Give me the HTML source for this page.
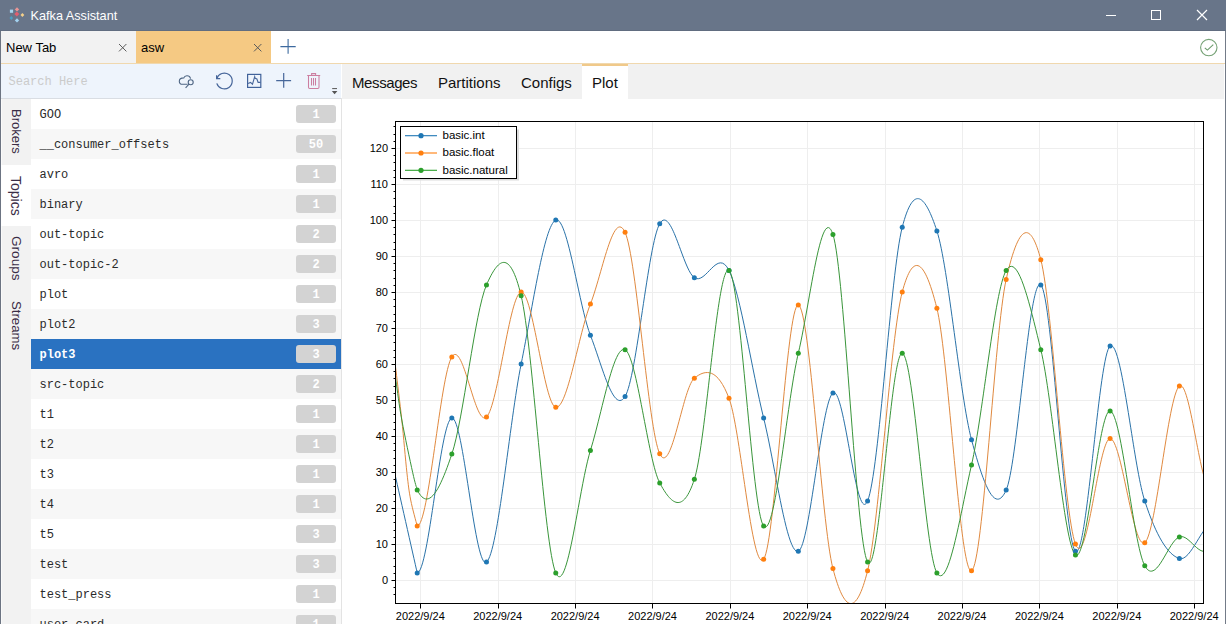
<!DOCTYPE html>
<html><head><meta charset="utf-8">
<style>
*{margin:0;padding:0;box-sizing:border-box}
html,body{width:1226px;height:624px;overflow:hidden;background:#fff;font-family:"Liberation Sans",sans-serif;position:relative}
.abs{position:absolute}
#title{left:0;top:0;width:1226px;height:31px;background:#687589;border-bottom:1px solid #616d80}
#title .t{position:absolute;left:30.5px;top:9px;font-size:12.7px;color:#fff;line-height:15px}
#tabbar{left:0;top:31px;width:1226px;height:32px;background:#fff}
.tab{position:absolute;top:0;height:32px;width:135px;font-size:13px;line-height:15px;color:#000}
.tab .lbl{position:absolute;left:5px;top:9px}
.tab .x{position:absolute;right:9.8px;top:12.8px;width:7.4px;height:7.4px;overflow:visible}
#orange{left:0;top:63px;width:1226px;height:1px;background:#f0d8ae}
#search{left:1px;top:64px;width:340px;height:35px;background:#eef4fc;border-bottom:1px solid #d9dde3}
#search .ph{position:absolute;left:7.5px;top:11px;font-family:"Liberation Mono",monospace;font-size:12px;color:#cbcbcb;line-height:14px}
#vtabs{left:1px;top:99px;width:30px;height:525px;background:#f2f2f2;border-left:1px solid #fafafa}
.vt{position:absolute;left:-1px;width:30px;color:#3a2d46;font-size:13.5px}
.vt span{position:absolute;left:22px;top:0;transform-origin:0 0;transform:rotate(90deg);white-space:nowrap;line-height:14px}
.row{position:absolute;left:31px;width:310px;height:30px;background:#fff}
.row.alt{background:#f7f7f7}
.row.sel{background:#2a72c1}
.row .tn{position:absolute;left:8.5px;top:9px;font-family:"Liberation Mono",monospace;font-size:12px;line-height:14px;color:#2a2a2a}
.row.sel .tn{color:#fff;font-weight:bold}
.row .badge{position:absolute;left:265px;top:6px;width:40px;height:18px;border-radius:3px;background:#d3d3d3;color:#fff;font-family:"Liberation Mono",monospace;font-weight:bold;font-size:12px;line-height:20px;text-align:center}
#split{left:341px;top:98px;width:1px;height:526px;background:#e3e3e3}
#rtabs{left:342px;top:64px;width:882px;height:35px;background:#f1f1f1}
.rt{position:absolute;top:0;height:35px;font-size:15px;line-height:17px;color:#111}
.rt span{position:absolute;top:10px;white-space:nowrap}
#plottab{left:240px;width:46px;background:#fff;border-top:2px solid #f0c98a}
#rborder{left:1225px;top:31px;width:1px;height:593px;background:#737b88}
#lborder{left:0;top:31px;width:1px;height:593px;background:#6c7482}
svg.chart{position:absolute;left:0;top:0}
</style></head><body>
<div id="title" class="abs">
  <svg class="abs" style="left:0;top:0" width="30" height="30" viewBox="0 0 30 30">
    <path d="M17,7.3L19.2,9.4L17,11.5L14.8,9.4Z" fill="#e99595"/>
    <rect x="9.9" y="9.6" width="3.2" height="3.2" fill="#a8d4ee"/>
    <path d="M16.8,11.6L19.3,14.1L16.8,16.6L14.3,14.1Z" fill="#df5f70"/>
    <path d="M22.4,12.9L24.3,14.9L22.4,16.9L20.5,14.9Z" fill="#f3d08a"/>
    <path d="M11.3,15.9L13.1,17.9L11.3,19.9L9.5,17.9Z" fill="#4b9ec2"/>
    <path d="M17,18.3L19.2,20.4L17,22.5L14.8,20.4Z" fill="#a3d2f0"/>
  </svg>
  <div class="t">Kafka Assistant</div>
  <svg class="abs" style="left:1100px;top:5px" width="120" height="22" viewBox="0 0 120 22">
    <path d="M6,10.5H16" stroke="#fff" stroke-width="1"/>
    <rect x="51.5" y="5.5" width="9" height="9" fill="none" stroke="#fff" stroke-width="1"/>
    <path d="M97,5L107,15M107,5L97,15" stroke="#fff" stroke-width="1.2"/>
  </svg>
</div>
<div id="tabbar" class="abs">
  <div class="tab" style="left:1px;background:#f2f2f2"><span class="lbl">New Tab</span>
    <svg class="x" viewBox="0 0 7.4 7.4"><path d="M0,0L7.4,7.4M7.4,0L0,7.4" stroke="#5a5a5a" stroke-width="1"/></svg></div>
  <div class="tab" style="left:136px;background:#f5c983"><span class="lbl">asw</span>
    <svg class="x" viewBox="0 0 7.4 7.4"><path d="M0,0L7.4,7.4M7.4,0L0,7.4" stroke="#5a5a5a" stroke-width="1"/></svg></div>
  <svg class="abs" style="left:279px;top:7px" width="18" height="18" viewBox="0 0 18 18"><path d="M1.4,8.6H16.7M9.1,1.1V15.7" stroke="#3d6a9f" stroke-width="1.1"/></svg>
  <svg class="abs" style="left:1198px;top:6px" width="22" height="22" viewBox="0 0 22 22"><circle cx="10.8" cy="10.6" r="8.2" fill="none" stroke="#76a276" stroke-width="1.1"/><path d="M6.8,10.8L9.4,13.1L15.3,7.6" fill="none" stroke="#6a9a6a" stroke-width="1.1"/></svg>
</div>
<div id="orange" class="abs"></div>
<div id="search" class="abs">
  <span class="ph">Search Here</span>
  <svg class="abs" style="left:169px;top:0" width="170" height="34" viewBox="170 64 170 34">
    <!-- cloud search -->
    <path d="M190.6,78.6 C190,76.6 188.4,75.7 186.8,75.8 C185.2,75.9 184.2,76.9 183.8,77.9 C181.2,77.9 179.3,79.4 179.3,81.2 C179.3,83 180.8,84.3 182.6,84.3 L187.6,84.3" fill="none" stroke="#4f6684" stroke-width="1.1"/>
    <circle cx="190.7" cy="82.3" r="2.5" fill="none" stroke="#4f6684" stroke-width="1.1"/>
    <path d="M189,84.2L185.6,87.8" stroke="#4f6684" stroke-width="1.1"/>
    <!-- refresh -->
    <path d="M216.8,78.6 A7.9,7.9 0 1 1 216.8,83.4" fill="none" stroke="#47669a" stroke-width="1.2"/>
    <path d="M216.6,75.3 L216.6,78.6 L220.3,78.6" fill="none" stroke="#47669a" stroke-width="1.2"/>
    <!-- chart -->
    <rect x="247.6" y="74.4" width="13.2" height="13" fill="none" stroke="#40629a" stroke-width="1.2"/>
    <path d="M248.1,83.4 L250.5,82.4 L252.5,84.2 L254.7,76.6 L255.2,78.3 L256.9,79 L258.1,82.4 L260.6,82.4" fill="none" stroke="#47669a" stroke-width="1.1"/>
    <!-- plus -->
    <path d="M276.2,80.6H291.1M283.7,73.1V87.8" stroke="#47679a" stroke-width="1.2"/>
    <!-- trash -->
    <path d="M307.2,75.5H320.2M311.6,75.5V73.6H315.6V75.5M308.5,75.5V87.2Q308.5,88.4 309.7,88.4H317.8Q319,88.4 319,87.2V75.5M311.5,78.1V85.5M313.5,78.1V85.5M315.5,78.1V85.5" fill="none" stroke="#cc7ea0" stroke-width="1.05"/>
    <!-- dropdown -->
    <path d="M332.2,88.6H337" stroke="#555" stroke-width="1"/>
    <path d="M331.8,91H337.4L334.6,94.2Z" fill="#555"/>
  </svg>
</div>
<div id="lborder" class="abs"></div>
<div id="vtabs" class="abs">
  <div class="vt" style="top:0;height:66px"><span style="top:10px;font-size:13px">Brokers</span></div>
  <div class="vt" style="top:66px;height:61px;background:#fff"><span style="top:11px;font-size:14px">Topics</span></div>
  <div class="vt" style="top:127px;height:65px"><span style="top:10px;font-size:13.6px">Groups</span></div>
  <div class="vt" style="top:192px;height:69px"><span style="top:10px;font-size:13.2px">Streams</span></div>
</div>
<div class="row" style="top:99px"><span class="tn">GOO</span><span class="badge">1</span></div>
<div class="row alt" style="top:129px"><span class="tn">__consumer_offsets</span><span class="badge">50</span></div>
<div class="row" style="top:159px"><span class="tn">avro</span><span class="badge">1</span></div>
<div class="row alt" style="top:189px"><span class="tn">binary</span><span class="badge">1</span></div>
<div class="row" style="top:219px"><span class="tn">out-topic</span><span class="badge">2</span></div>
<div class="row alt" style="top:249px"><span class="tn">out-topic-2</span><span class="badge">2</span></div>
<div class="row" style="top:279px"><span class="tn">plot</span><span class="badge">1</span></div>
<div class="row alt" style="top:309px"><span class="tn">plot2</span><span class="badge">3</span></div>
<div class="row sel" style="top:339px"><span class="tn">plot3</span><span class="badge">3</span></div>
<div class="row alt" style="top:369px"><span class="tn">src-topic</span><span class="badge">2</span></div>
<div class="row" style="top:399px"><span class="tn">t1</span><span class="badge">1</span></div>
<div class="row alt" style="top:429px"><span class="tn">t2</span><span class="badge">1</span></div>
<div class="row" style="top:459px"><span class="tn">t3</span><span class="badge">1</span></div>
<div class="row alt" style="top:489px"><span class="tn">t4</span><span class="badge">1</span></div>
<div class="row" style="top:519px"><span class="tn">t5</span><span class="badge">3</span></div>
<div class="row alt" style="top:549px"><span class="tn">test</span><span class="badge">3</span></div>
<div class="row" style="top:579px"><span class="tn">test_press</span><span class="badge">1</span></div>
<div class="row alt" style="top:609px"><span class="tn">user_card</span><span class="badge">1</span></div>
<div id="split" class="abs"></div>
<div id="rtabs" class="abs">
  <div class="rt" style="left:0;width:86px"><span style="left:10px;letter-spacing:-0.4px">Messages</span></div>
  <div class="rt" style="left:86px;width:83px"><span style="left:10px">Partitions</span></div>
  <div class="rt" style="left:169px;width:71px"><span style="left:10px">Configs</span></div>
  <div class="rt" id="plottab"><span style="left:10px;top:8px">Plot</span></div>
</div>
<div id="rborder" class="abs"></div>
<svg class="chart" width="1226" height="624" viewBox="0 0 1226 624"><defs><clipPath id="clip"><rect x="395.5" y="121.5" width="808.0" height="482.0"/></clipPath></defs><path d="M420.5,121.5V603.5 M498.5,121.5V603.5 M575.5,121.5V603.5 M652.5,121.5V603.5 M730.5,121.5V603.5 M807.5,121.5V603.5 M885.5,121.5V603.5 M962.5,121.5V603.5 M1039.5,121.5V603.5 M1117.5,121.5V603.5 M1194.5,121.5V603.5 M395.5,580.5H1203.5 M395.5,544.5H1203.5 M395.5,508.5H1203.5 M395.5,472.5H1203.5 M395.5,436.5H1203.5 M395.5,400.5H1203.5 M395.5,364.5H1203.5 M395.5,328.5H1203.5 M395.5,292.5H1203.5 M395.5,256.5H1203.5 M395.5,220.5H1203.5 M395.5,184.5H1203.5 M395.5,148.5H1203.5" stroke="#eeeeee" stroke-width="1" fill="none"/><g clip-path="url(#clip)"><path d="M394.00,470.00 C397.87,487.15 413.33,555.75 417.20,572.90 C428.75,572.90 440.30,419.90 451.84,418.10 C463.39,416.30 474.94,571.10 486.49,562.10 C498.04,553.10 509.59,421.10 521.13,364.10 C532.68,307.10 544.23,224.90 555.78,220.10 C567.33,215.30 578.88,305.90 590.42,335.30 C601.97,364.70 613.52,415.10 625.07,396.50 C636.62,377.90 648.17,243.50 659.72,223.70 C671.26,203.90 682.81,269.90 694.36,277.70 C705.91,285.50 717.46,247.10 729.00,270.50 C740.55,293.90 752.10,371.30 763.65,418.10 C775.20,464.90 786.75,555.50 798.30,551.30 C809.84,547.10 821.39,401.30 832.94,392.90 C844.49,384.50 856.04,528.50 867.59,500.90 C879.13,473.30 890.68,272.30 902.23,227.30 C913.78,182.30 925.33,195.50 936.88,230.90 C948.42,266.30 959.97,396.50 971.52,439.70 C983.07,482.90 994.62,515.90 1006.16,490.10 C1017.71,464.30 1029.26,274.70 1040.81,284.90 C1052.36,295.10 1063.91,541.10 1075.46,551.30 C1087.00,561.50 1098.55,354.50 1110.10,346.10 C1121.65,337.70 1133.20,465.50 1144.75,500.90 C1156.29,536.30 1167.84,554.90 1179.39,558.50 C1190.94,562.10 1202.49,522.50 1214.04,522.50" stroke="#2a72a8" stroke-width="1" fill="none"/><path d="M394.00,353.80 C394.33,356.63 394.70,359.77 396.00,370.80 C397.30,381.83 399.98,403.03 401.80,420.00 C403.62,436.97 405.42,459.27 406.90,472.60 C408.38,485.93 408.98,491.08 410.70,500.00 C412.42,508.92 416.12,521.75 417.20,526.10 C428.75,526.10 440.30,375.08 451.84,356.90 C463.39,338.72 474.94,427.82 486.49,417.02 C498.04,406.22 509.59,293.72 521.13,292.10 C532.68,290.48 544.23,405.32 555.78,407.30 C567.33,409.28 578.88,333.14 590.42,303.98 C601.97,274.82 613.52,207.38 625.07,232.34 C636.62,257.30 648.17,429.44 659.72,453.74 C671.26,478.04 682.81,387.38 694.36,378.14 C705.91,368.90 717.46,368.12 729.00,398.30 C740.55,428.48 752.10,574.76 763.65,559.22 C775.20,543.68 786.75,303.50 798.30,305.06 C809.84,306.62 821.39,524.30 832.94,568.58 C844.49,612.86 856.04,616.82 867.59,570.74 C879.13,524.66 890.68,335.84 902.23,292.10 C913.78,248.36 925.33,261.86 936.88,308.30 C948.42,354.74 959.97,575.54 971.52,570.74 C983.07,565.94 994.62,331.34 1006.16,279.50 C1017.71,227.66 1029.26,215.60 1040.81,259.70 C1052.36,303.80 1063.91,514.28 1075.46,544.10 C1087.00,573.92 1098.55,438.86 1110.10,438.62 C1121.65,438.38 1133.20,551.42 1144.75,542.66 C1156.29,533.90 1167.84,395.42 1179.39,386.06 C1190.94,376.70 1202.49,514.16 1214.04,486.50" stroke="#e0893f" stroke-width="1" fill="none"/><path d="M394.00,368.00 C394.33,370.22 394.70,372.63 396.00,381.30 C397.30,389.97 399.02,404.78 401.80,420.00 C404.58,435.22 410.13,460.95 412.70,472.60 C415.27,484.25 416.45,487.02 417.20,489.90 C428.75,513.26 440.30,488.30 451.84,454.10 C463.39,419.90 474.94,311.30 486.49,284.90 C498.04,258.50 509.59,247.70 521.13,295.70 C532.68,343.70 544.23,547.10 555.78,572.90 C567.33,598.70 578.88,487.70 590.42,450.50 C601.97,413.30 613.52,344.30 625.07,349.70 C636.62,355.10 648.17,461.30 659.72,482.90 C671.26,504.50 682.81,514.70 694.36,479.30 C705.91,443.90 717.46,262.70 729.00,270.50 C740.55,278.30 752.10,512.30 763.65,526.10 C775.20,539.90 786.75,401.90 798.30,353.30 C809.84,304.70 821.39,199.70 832.94,234.50 C844.49,269.30 856.04,542.30 867.59,562.10 C879.13,581.90 890.68,351.50 902.23,353.30 C913.78,355.10 925.33,554.30 936.88,572.90 C948.42,591.50 959.97,515.30 971.52,464.90 C983.07,414.50 994.62,289.70 1006.16,270.50 C1017.71,251.30 1029.26,302.30 1040.81,349.70 C1052.36,397.10 1063.91,544.70 1075.46,554.90 C1087.00,565.10 1098.55,409.10 1110.10,410.90 C1121.65,412.70 1133.20,544.70 1144.75,565.70 C1156.29,586.70 1167.84,541.10 1179.39,536.90 C1190.94,532.70 1202.49,568.70 1214.04,540.50" stroke="#39953a" stroke-width="1" fill="none"/><circle cx="417.20" cy="572.90" r="2.5" fill="#1f77b4"/><circle cx="451.84" cy="418.10" r="2.5" fill="#1f77b4"/><circle cx="486.49" cy="562.10" r="2.5" fill="#1f77b4"/><circle cx="521.13" cy="364.10" r="2.5" fill="#1f77b4"/><circle cx="555.78" cy="220.10" r="2.5" fill="#1f77b4"/><circle cx="590.42" cy="335.30" r="2.5" fill="#1f77b4"/><circle cx="625.07" cy="396.50" r="2.5" fill="#1f77b4"/><circle cx="659.72" cy="223.70" r="2.5" fill="#1f77b4"/><circle cx="694.36" cy="277.70" r="2.5" fill="#1f77b4"/><circle cx="729.00" cy="270.50" r="2.5" fill="#1f77b4"/><circle cx="763.65" cy="418.10" r="2.5" fill="#1f77b4"/><circle cx="798.30" cy="551.30" r="2.5" fill="#1f77b4"/><circle cx="832.94" cy="392.90" r="2.5" fill="#1f77b4"/><circle cx="867.59" cy="500.90" r="2.5" fill="#1f77b4"/><circle cx="902.23" cy="227.30" r="2.5" fill="#1f77b4"/><circle cx="936.88" cy="230.90" r="2.5" fill="#1f77b4"/><circle cx="971.52" cy="439.70" r="2.5" fill="#1f77b4"/><circle cx="1006.16" cy="490.10" r="2.5" fill="#1f77b4"/><circle cx="1040.81" cy="284.90" r="2.5" fill="#1f77b4"/><circle cx="1075.46" cy="551.30" r="2.5" fill="#1f77b4"/><circle cx="1110.10" cy="346.10" r="2.5" fill="#1f77b4"/><circle cx="1144.75" cy="500.90" r="2.5" fill="#1f77b4"/><circle cx="1179.39" cy="558.50" r="2.5" fill="#1f77b4"/><circle cx="417.20" cy="526.10" r="2.5" fill="#ff7f0e"/><circle cx="451.84" cy="356.90" r="2.5" fill="#ff7f0e"/><circle cx="486.49" cy="417.02" r="2.5" fill="#ff7f0e"/><circle cx="521.13" cy="292.10" r="2.5" fill="#ff7f0e"/><circle cx="555.78" cy="407.30" r="2.5" fill="#ff7f0e"/><circle cx="590.42" cy="303.98" r="2.5" fill="#ff7f0e"/><circle cx="625.07" cy="232.34" r="2.5" fill="#ff7f0e"/><circle cx="659.72" cy="453.74" r="2.5" fill="#ff7f0e"/><circle cx="694.36" cy="378.14" r="2.5" fill="#ff7f0e"/><circle cx="729.00" cy="398.30" r="2.5" fill="#ff7f0e"/><circle cx="763.65" cy="559.22" r="2.5" fill="#ff7f0e"/><circle cx="798.30" cy="305.06" r="2.5" fill="#ff7f0e"/><circle cx="832.94" cy="568.58" r="2.5" fill="#ff7f0e"/><circle cx="867.59" cy="570.74" r="2.5" fill="#ff7f0e"/><circle cx="902.23" cy="292.10" r="2.5" fill="#ff7f0e"/><circle cx="936.88" cy="308.30" r="2.5" fill="#ff7f0e"/><circle cx="971.52" cy="570.74" r="2.5" fill="#ff7f0e"/><circle cx="1006.16" cy="279.50" r="2.5" fill="#ff7f0e"/><circle cx="1040.81" cy="259.70" r="2.5" fill="#ff7f0e"/><circle cx="1075.46" cy="544.10" r="2.5" fill="#ff7f0e"/><circle cx="1110.10" cy="438.62" r="2.5" fill="#ff7f0e"/><circle cx="1144.75" cy="542.66" r="2.5" fill="#ff7f0e"/><circle cx="1179.39" cy="386.06" r="2.5" fill="#ff7f0e"/><circle cx="417.20" cy="490.10" r="2.5" fill="#2ca02c"/><circle cx="451.84" cy="454.10" r="2.5" fill="#2ca02c"/><circle cx="486.49" cy="284.90" r="2.5" fill="#2ca02c"/><circle cx="521.13" cy="295.70" r="2.5" fill="#2ca02c"/><circle cx="555.78" cy="572.90" r="2.5" fill="#2ca02c"/><circle cx="590.42" cy="450.50" r="2.5" fill="#2ca02c"/><circle cx="625.07" cy="349.70" r="2.5" fill="#2ca02c"/><circle cx="659.72" cy="482.90" r="2.5" fill="#2ca02c"/><circle cx="694.36" cy="479.30" r="2.5" fill="#2ca02c"/><circle cx="729.00" cy="270.50" r="2.5" fill="#2ca02c"/><circle cx="763.65" cy="526.10" r="2.5" fill="#2ca02c"/><circle cx="798.30" cy="353.30" r="2.5" fill="#2ca02c"/><circle cx="832.94" cy="234.50" r="2.5" fill="#2ca02c"/><circle cx="867.59" cy="562.10" r="2.5" fill="#2ca02c"/><circle cx="902.23" cy="353.30" r="2.5" fill="#2ca02c"/><circle cx="936.88" cy="572.90" r="2.5" fill="#2ca02c"/><circle cx="971.52" cy="464.90" r="2.5" fill="#2ca02c"/><circle cx="1006.16" cy="270.50" r="2.5" fill="#2ca02c"/><circle cx="1040.81" cy="349.70" r="2.5" fill="#2ca02c"/><circle cx="1075.46" cy="554.90" r="2.5" fill="#2ca02c"/><circle cx="1110.10" cy="410.90" r="2.5" fill="#2ca02c"/><circle cx="1144.75" cy="565.70" r="2.5" fill="#2ca02c"/><circle cx="1179.39" cy="536.90" r="2.5" fill="#2ca02c"/></g><rect x="395.5" y="121.5" width="808.0" height="482.0" fill="none" stroke="#000" stroke-width="1"/><path d="M420.5,603.5v5 M498.5,603.5v5 M575.5,603.5v5 M652.5,603.5v5 M730.5,603.5v5 M807.5,603.5v5 M885.5,603.5v5 M962.5,603.5v5 M1039.5,603.5v5 M1117.5,603.5v5 M1194.5,603.5v5 M395.5,594.5h-2 M395.5,587.5h-2 M395.5,580.5h-4 M395.5,573.5h-2 M395.5,566.5h-2 M395.5,558.5h-2 M395.5,551.5h-2 M395.5,544.5h-4 M395.5,537.5h-2 M395.5,530.5h-2 M395.5,522.5h-2 M395.5,515.5h-2 M395.5,508.5h-4 M395.5,501.5h-2 M395.5,494.5h-2 M395.5,486.5h-2 M395.5,479.5h-2 M395.5,472.5h-4 M395.5,465.5h-2 M395.5,458.5h-2 M395.5,450.5h-2 M395.5,443.5h-2 M395.5,436.5h-4 M395.5,429.5h-2 M395.5,422.5h-2 M395.5,414.5h-2 M395.5,407.5h-2 M395.5,400.5h-4 M395.5,393.5h-2 M395.5,386.5h-2 M395.5,378.5h-2 M395.5,371.5h-2 M395.5,364.5h-4 M395.5,357.5h-2 M395.5,350.5h-2 M395.5,342.5h-2 M395.5,335.5h-2 M395.5,328.5h-4 M395.5,321.5h-2 M395.5,314.5h-2 M395.5,306.5h-2 M395.5,299.5h-2 M395.5,292.5h-4 M395.5,285.5h-2 M395.5,278.5h-2 M395.5,270.5h-2 M395.5,263.5h-2 M395.5,256.5h-4 M395.5,249.5h-2 M395.5,242.5h-2 M395.5,234.5h-2 M395.5,227.5h-2 M395.5,220.5h-4 M395.5,213.5h-2 M395.5,206.5h-2 M395.5,198.5h-2 M395.5,191.5h-2 M395.5,184.5h-4 M395.5,177.5h-2 M395.5,170.5h-2 M395.5,162.5h-2 M395.5,155.5h-2 M395.5,148.5h-4 M395.5,141.5h-2 M395.5,134.5h-2 M395.5,126.5h-2" stroke="#000" stroke-width="1" fill="none"/><g font-family="Liberation Sans" font-size="11" fill="#000"><text x="388" y="584.1" text-anchor="end">0</text><text x="388" y="548.1" text-anchor="end">10</text><text x="388" y="512.1" text-anchor="end">20</text><text x="388" y="476.1" text-anchor="end">30</text><text x="388" y="440.1" text-anchor="end">40</text><text x="388" y="404.1" text-anchor="end">50</text><text x="388" y="368.1" text-anchor="end">60</text><text x="388" y="332.1" text-anchor="end">70</text><text x="388" y="296.1" text-anchor="end">80</text><text x="388" y="260.1" text-anchor="end">90</text><text x="388" y="224.1" text-anchor="end">100</text><text x="388" y="188.1" text-anchor="end">110</text><text x="388" y="152.1" text-anchor="end">120</text><text x="420.3" y="620" text-anchor="middle">2022/9/24</text><text x="497.7" y="620" text-anchor="middle">2022/9/24</text><text x="575.1" y="620" text-anchor="middle">2022/9/24</text><text x="652.5" y="620" text-anchor="middle">2022/9/24</text><text x="729.9" y="620" text-anchor="middle">2022/9/24</text><text x="807.2" y="620" text-anchor="middle">2022/9/24</text><text x="884.6" y="620" text-anchor="middle">2022/9/24</text><text x="962.0" y="620" text-anchor="middle">2022/9/24</text><text x="1039.4" y="620" text-anchor="middle">2022/9/24</text><text x="1116.8" y="620" text-anchor="middle">2022/9/24</text><text x="1194.2" y="620" text-anchor="middle">2022/9/24</text></g><rect x="403" y="129.5" width="116" height="51" fill="#dcdcdc"/><rect x="400.5" y="126.5" width="116" height="52" fill="#fff" stroke="#000" stroke-width="1"/><path d="M405,135.7H437" stroke="#1f77b4" stroke-width="1.1"/><circle cx="421" cy="135.7" r="2.6" fill="#1f77b4"/><text x="442.5" y="138.9" font-family="Liberation Sans" font-size="11.5" fill="#000">basic.int</text><path d="M405,153.0H437" stroke="#ff7f0e" stroke-width="1.1"/><circle cx="421" cy="153.0" r="2.6" fill="#ff7f0e"/><text x="442.5" y="156.2" font-family="Liberation Sans" font-size="11.5" fill="#000">basic.float</text><path d="M405,170.3H437" stroke="#2ca02c" stroke-width="1.1"/><circle cx="421" cy="170.3" r="2.6" fill="#2ca02c"/><text x="442.5" y="173.5" font-family="Liberation Sans" font-size="11.5" fill="#000">basic.natural</text></svg>
</body></html>
